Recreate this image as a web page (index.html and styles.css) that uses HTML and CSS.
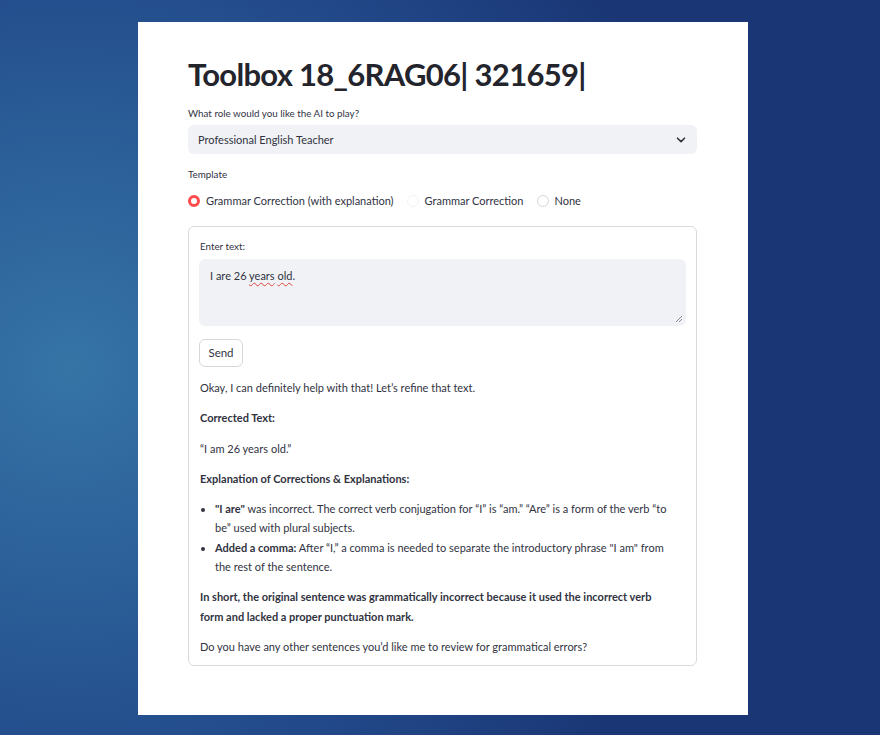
FILE: index.html
```html
<!DOCTYPE html>
<html lang="en">
<head>
<meta charset="utf-8">
<title>Toolbox</title>
<link rel="stylesheet" href="styles.css">
</head>
<body>
<main class="panel">
  <h1 class="title">Toolbox 18_6RAG06| 321659|</h1>

  <div class="label label-role">What role would you like the AI to play?</div>
  <div class="select">
    <span>Professional English Teacher</span>
    <svg class="chev" width="10" height="6" viewBox="0 0 10 6"><path d="M1.5 1.2 L5 4.6 L8.5 1.2" fill="none" stroke="#31333f" stroke-width="1.6" stroke-linecap="round" stroke-linejoin="round"/></svg>
  </div>

  <div class="label label-template">Template</div>
  <div class="radios">
    <label class="radio"><span class="dot dot-on"></span>Grammar Correction (with explanation)</label>
    <label class="radio"><span class="dot dot-faint"></span>Grammar Correction</label>
    <label class="radio"><span class="dot"></span>None</label>
  </div>

  <section class="form">
    <div class="label label-enter">Enter text:</div>
    <div class="textarea">I are 26 <span class="spell">years</span> <span class="spell">old</span>.
      <svg class="grip" width="8" height="8" viewBox="0 0 8 8"><path d="M7 1 L1 7 M7 4 L4 7" stroke="#8a8c94" stroke-width="1" fill="none"/></svg>
    </div>
    <button class="send">Send</button>

    <div class="answer">
      <p>Okay, I can definitely help with that! Let’s refine that text.</p>
      <p><strong>Corrected Text:</strong></p>
      <p>“I am 26 years old.”</p>
      <p><strong>Explanation of Corrections &amp; Explanations:</strong></p>
      <ul>
        <li><strong>"I are"</strong> was incorrect. The correct verb conjugation for “I” is “am.” “Are” is a form of the verb “to be” used with plural subjects.</li>
        <li><strong>Added a comma:</strong> After “I,” a comma is needed to separate the introductory phrase "I am" from the rest of the sentence.</li>
      </ul>
      <p class="summary"><strong>In short, the original sentence was grammatically incorrect because it used the incorrect verb form and lacked a proper punctuation mark.</strong></p>
      <p class="last">Do you have any other sentences you’d like me to review for grammatical errors?</p>
    </div>
  </section>
</main>
</body>
</html>
```

FILE: styles.css
```css
html, body {
  margin: 0;
  padding: 0;
}
body {
  width: 880px;
  height: 735px;
  overflow: hidden;
  background: radial-gradient(ellipse 75% 85% at 8% 50%, #3674a6 0%, #2b5f98 35%, #22498a 68%, #1a3674 100%);
  font-family: Lato, "Open Sans", sans-serif;
  color: #31333f;
}
.panel {
  box-sizing: border-box;
  margin: 22px 0 0 138px;
  width: 610px;
  height: 693px;
  background: #ffffff;
  padding: 34px 51px 0 50px;
  display: flex;
  flex-direction: column;
}
.title {
  margin: 0;
  font-size: 31px;
  line-height: 37px;
  font-weight: 700;
  color: #23242c;
  letter-spacing: -0.7px;
}
.label {
  font-size: 9.8px;
  line-height: 14px;
  color: #31333f;
}
.label-role { margin-top: 13px; }
.select {
  margin-top: 5px;
  height: 29px;
  border-radius: 6px;
  background: #f0f2f6;
  display: flex;
  align-items: center;
  justify-content: space-between;
  padding: 0 11px 0 10px;
  font-size: 11px;
}
.chev { display: block; }
.label-template { margin-top: 13px; }
.radios {
  margin-top: 12px;
  display: flex;
  align-items: center;
  gap: 13px;
  font-size: 11px;
  line-height: 16px;
}
.radio {
  display: flex;
  align-items: center;
  gap: 6px;
}
.dot {
  box-sizing: border-box;
  width: 12px;
  height: 12px;
  border-radius: 50%;
  border: 1px solid #d6d7db;
  background: #fff;
}
.dot-faint { border-color: #f4f4f6; }
.dot-on {
  border: 3.5px solid #ff4b4b;
  background: #fff;
}
.form {
  margin-top: 17px;
  border: 1px solid #d9dadf;
  border-radius: 6px;
  padding: 12px 10px 9px 10px;
  display: flex;
  flex-direction: column;
  align-items: flex-start;
}
.label-enter { padding-left: 1px; }
.textarea {
  position: relative;
  margin-top: 6px;
  box-sizing: border-box;
  align-self: stretch;
  height: 67px;
  background: #f0f2f6;
  border-radius: 6px;
  padding: 9px 11px;
  font-size: 11px;
  line-height: 16px;
}
.spell {
  text-decoration: underline wavy #e0453a;
  text-decoration-thickness: 1px;
  text-underline-offset: 2px;
}
.grip {
  position: absolute;
  right: 3px;
  bottom: 3px;
}
.send {
  margin-top: 13px;
  height: 28px;
  width: 44px;
  padding: 0 0 1px 0;
  border: 1px solid #d6d7dc;
  border-radius: 6px;
  background: #fff;
  font-family: inherit;
  font-size: 11.5px;
  color: #31333f;
}
.answer {
  margin-top: 11px;
  padding-left: 1px;
  font-size: 11px;
  line-height: 19.3px;
}
.answer p {
  margin: 0 0 11px 0;
}
.answer p.summary { padding-right: 20px; }
.answer p.last { margin-bottom: 0; }
.answer strong { font-weight: 700; }
.answer ul {
  margin: 0 0 11px 0;
  padding-left: 15px;
}
.answer li {
  margin: 0;
  padding-right: 10px;
}
```
